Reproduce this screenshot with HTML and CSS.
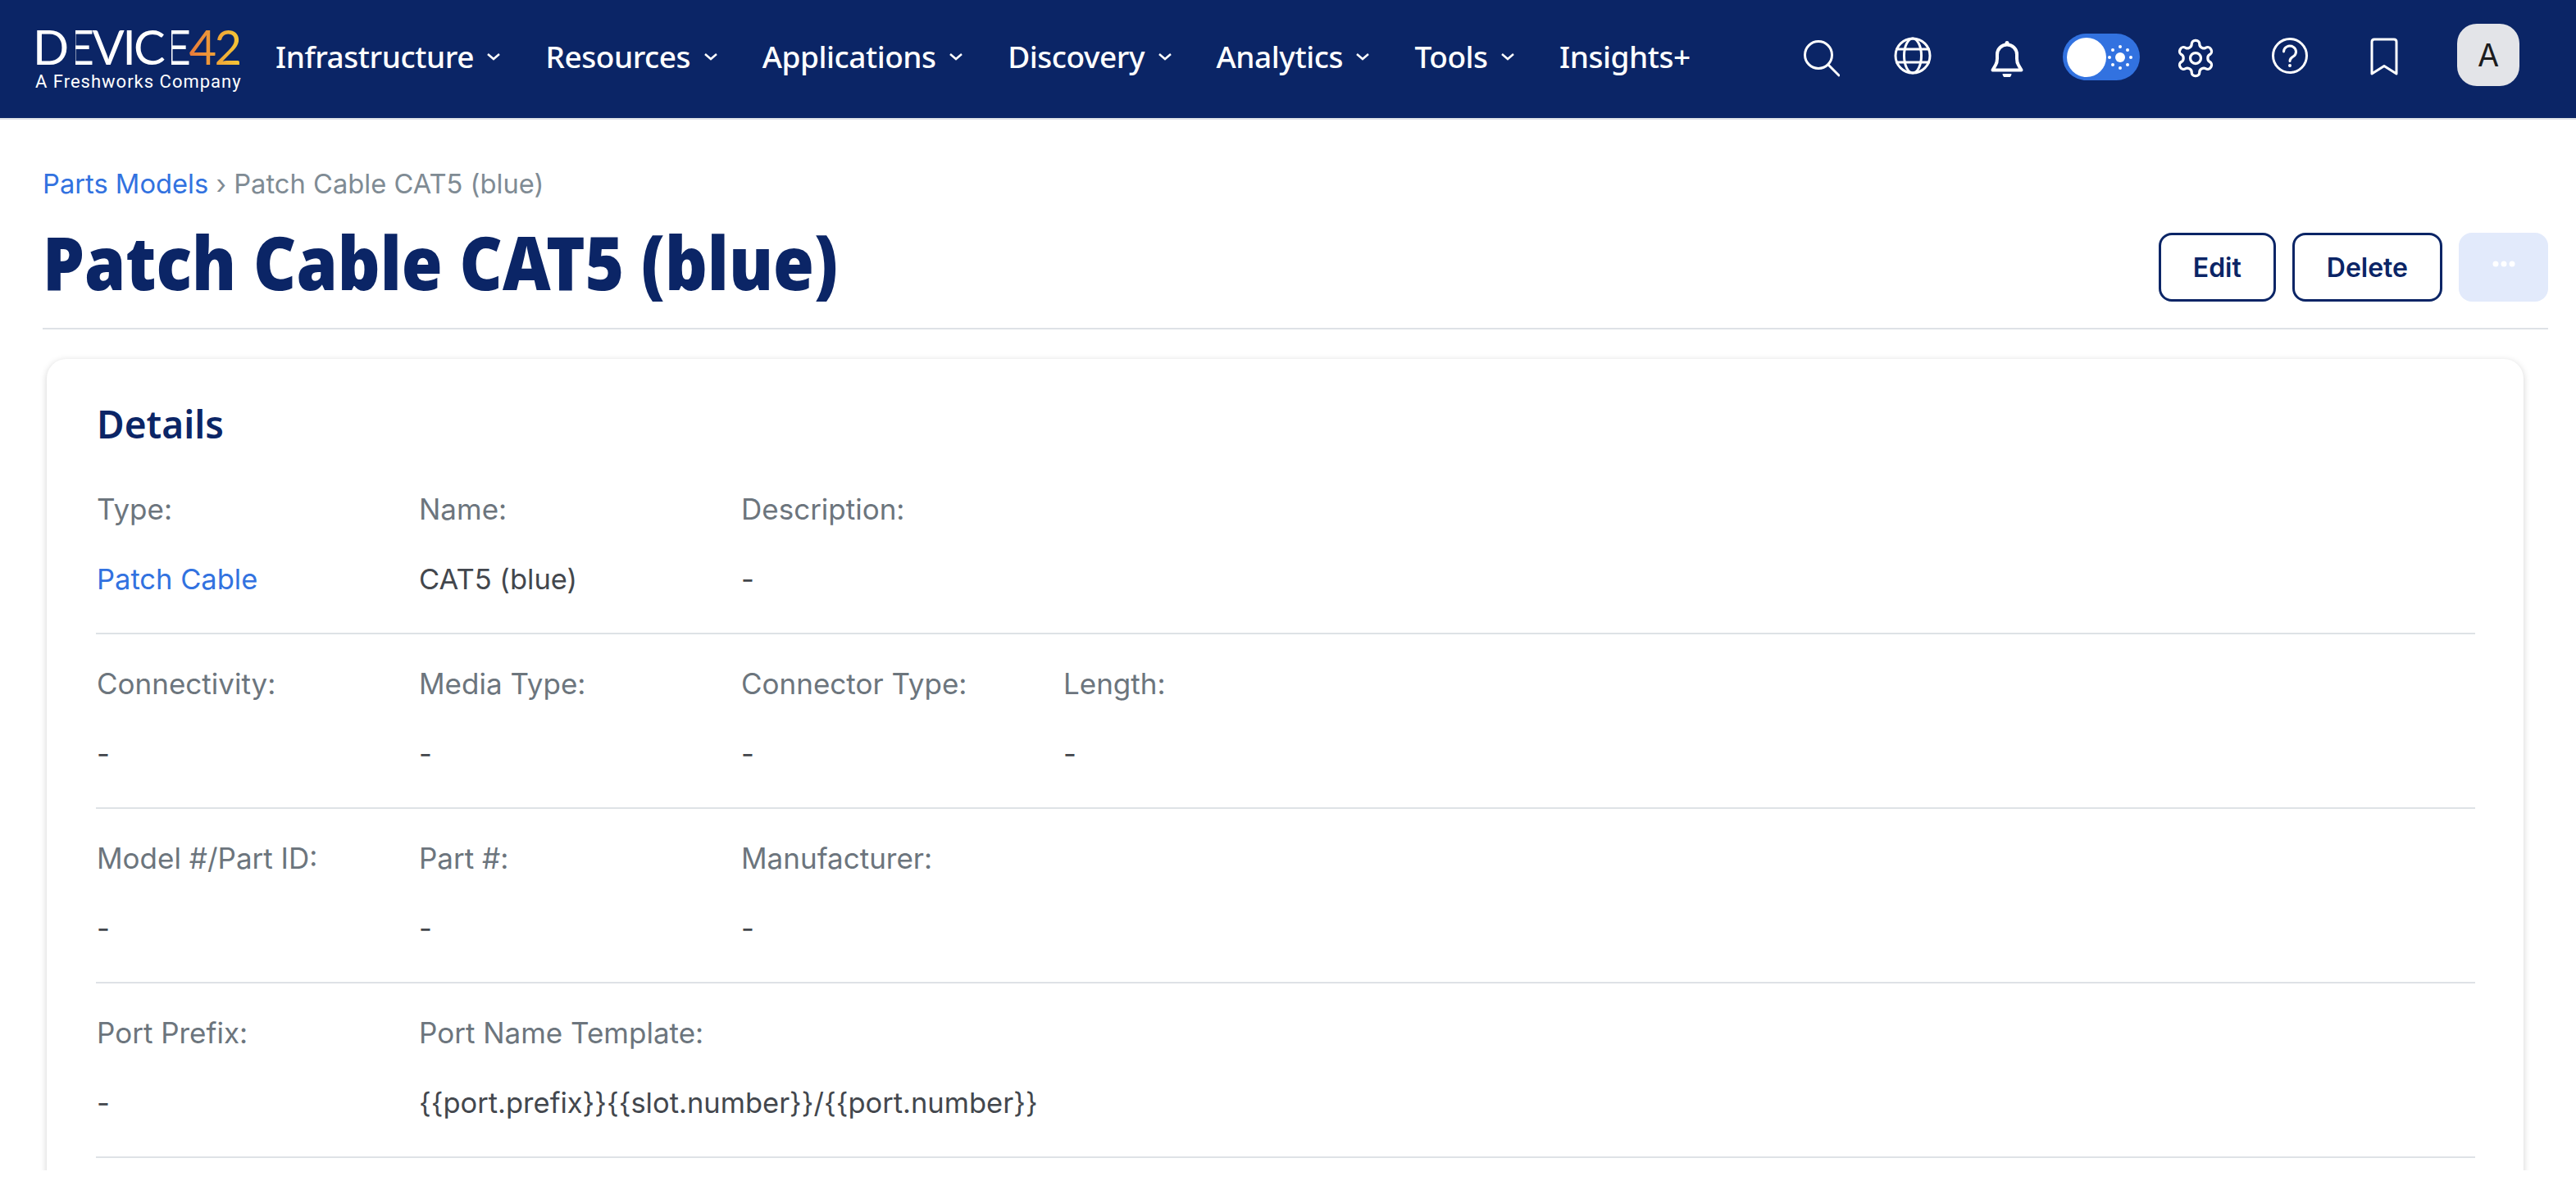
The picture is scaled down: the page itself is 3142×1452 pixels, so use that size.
FILE: index.html
```html
<!DOCTYPE html>
<html lang="en">
<head>
    <meta charset="UTF-8">
    <meta name="viewport" content="width=device-width, initial-scale=1.0">
    <title>Patch Cable CAT5 (blue)</title>
    <link rel="stylesheet" href="styles.css">
</head>
<body>
    <nav class="topbar">
        <a class="logo" href="#">
            <span class="logo-name">D<span class="logo-e">E</span>VIC<span class="logo-e">E</span><span class="logo-num">42</span></span>
            <span class="logo-sub">A Freshworks Company</span>
        </a>
        <ul class="menu">
            <li class="menu-item">Infrastructure <svg class="chevron" viewBox="0 0 18 10"><path d="M2 2l7 6 7-6"/></svg></li>
            <li class="menu-item">Resources <svg class="chevron" viewBox="0 0 18 10"><path d="M2 2l7 6 7-6"/></svg></li>
            <li class="menu-item">Applications <svg class="chevron" viewBox="0 0 18 10"><path d="M2 2l7 6 7-6"/></svg></li>
            <li class="menu-item">Discovery <svg class="chevron" viewBox="0 0 18 10"><path d="M2 2l7 6 7-6"/></svg></li>
            <li class="menu-item">Analytics <svg class="chevron" viewBox="0 0 18 10"><path d="M2 2l7 6 7-6"/></svg></li>
            <li class="menu-item">Tools <svg class="chevron" viewBox="0 0 18 10"><path d="M2 2l7 6 7-6"/></svg></li>
            <li class="menu-item">Insights+</li>
        </ul>
        <div class="tools">
            <span class="tool">
                <svg class="icon" viewBox="0 0 52 52"><circle cx="26" cy="25" r="16.5"/><path d="M38 37l13 13"/></svg>
            </span>
            <span class="tool">
                <svg class="icon" viewBox="0 0 52 52"><circle cx="26" cy="26" r="21"/><ellipse cx="26" cy="26" rx="10.5" ry="21"/><path d="M6.5 18h39M6.5 34h39"/></svg>
            </span>
            <span class="tool">
                <svg class="icon bell" viewBox="0 0 52 52"><path d="M8.500 43.500h35l-3.500-6q-2-3-2-8v-5a12 12 0 0 0-24 0v5q0 5-2 8z" stroke-linejoin="round"/><circle class="solid" cx="26" cy="10.500" r="2.500"/><path class="solid" d="M20.500 48h11a5.500 5.500 0 0 1-11 0z"/></svg>
            </span>
            <span class="tool">
                <span class="switch">
                    <span class="switch-knob"></span>
                    <svg class="switch-sun" viewBox="0 0 32 32">
                        <circle cx="16" cy="16" r="6"/>
                        <circle cx="16" cy="3" r="2"/><circle cx="16" cy="29" r="2"/><circle cx="3" cy="16" r="2"/><circle cx="29" cy="16" r="2"/>
                        <circle cx="7" cy="7" r="2"/><circle cx="25" cy="7" r="2"/><circle cx="7" cy="25" r="2"/><circle cx="25" cy="25" r="2"/>
                    </svg>
                </span>
            </span>
            <span class="tool">
                <svg class="icon gear" viewBox="0 0 24 24"><path d="M12.220 2h-.44a2 2 0 0 0-2 2v.18a2 2 0 0 1-1 1.730l-.43.25a2 2 0 0 1-2 0l-.15-.08a2 2 0 0 0-2.730.73l-.22.38a2 2 0 0 0 .73 2.730l.15.1a2 2 0 0 1 1 1.720v.51a2 2 0 0 1-1 1.740l-.15.09a2 2 0 0 0-.73 2.730l.22.38a2 2 0 0 0 2.730.73l.15-.08a2 2 0 0 1 2 0l.43.25a2 2 0 0 1 1 1.730V20a2 2 0 0 0 2 2h.44a2 2 0 0 0 2-2v-.18a2 2 0 0 1 1-1.730l.43-.25a2 2 0 0 1 2 0l.15.08a2 2 0 0 0 2.730-.73l.22-.39a2 2 0 0 0-.73-2.730l-.15-.08a2 2 0 0 1-1-1.740v-.5a2 2 0 0 1 1-1.740l.15-.09a2 2 0 0 0 .73-2.730l-.22-.38a2 2 0 0 0-2.730-.73l-.15.08a2 2 0 0 1-2 0l-.43-.25a2 2 0 0 1-1-1.730V4a2 2 0 0 0-2-2z"/><circle cx="12" cy="12" r="3"/></svg>
            </span>
            <span class="tool">
                <svg class="icon" viewBox="0 0 52 52"><circle cx="26" cy="26" r="20.500"/><path d="M18.500 21a7.500 7 0 1 1 11.500 6q-4 2.500-4 5.500"/><circle class="solid" cx="26" cy="38" r="2"/></svg>
            </span>
            <span class="tool">
                <svg class="icon" viewBox="0 0 52 52"><path d="M11 48V9q0-3 3-3h24q3 0 3 3v39L26 38.500z" stroke-linejoin="round"/></svg>
            </span>
            <span class="avatar">A</span>
        </div>
    </nav>

    <main class="page">
        <p class="crumbs"><a href="#">Parts Models</a> › Patch Cable CAT5 (blue)</p>
        <header class="page-head">
            <h1>Patch Cable CAT5 (blue)</h1>
            <div class="actions">
                <button class="btn">Edit</button>
                <button class="btn">Delete</button>
                <button class="btn-more">
                    <svg viewBox="0 0 28 8"><circle cx="4" cy="4" r="3.500"/><circle cx="14" cy="4" r="3.500"/><circle cx="24" cy="4" r="3.500"/></svg>
                </button>
            </div>
        </header>

        <section class="card">
            <h2>Details</h2>
            <div class="row">
                <div class="field"><span class="label">Type:</span><a class="value link" href="#">Patch Cable</a></div>
                <div class="field"><span class="label">Name:</span><span class="value">CAT5 (blue)</span></div>
                <div class="field"><span class="label">Description:</span><span class="value">-</span></div>
            </div>
            <div class="row">
                <div class="field"><span class="label">Connectivity:</span><span class="value">-</span></div>
                <div class="field"><span class="label">Media Type:</span><span class="value">-</span></div>
                <div class="field"><span class="label">Connector Type:</span><span class="value">-</span></div>
                <div class="field"><span class="label">Length:</span><span class="value">-</span></div>
            </div>
            <div class="row">
                <div class="field"><span class="label">Model #/Part ID:</span><span class="value">-</span></div>
                <div class="field"><span class="label">Part #:</span><span class="value">-</span></div>
                <div class="field"><span class="label">Manufacturer:</span><span class="value">-</span></div>
            </div>
            <div class="row">
                <div class="field"><span class="label">Port Prefix:</span><span class="value">-</span></div>
                <div class="field field-wide"><span class="label">Port Name Template:</span><span class="value">{{port.prefix}}{{slot.number}}/{{port.number}}</span></div>
            </div>
        </section>
    </main>
</body>
</html>
```
FILE: styles.css
```css
* {
    box-sizing: border-box;
}

html, body {
    height: 100%;
}

body {
    margin: 0;
    background-color: white;
    color: #43474d;
    font-family: Inter, "Liberation Sans", sans-serif;
    overflow: hidden;
}

a {
    color: #3272e0;
    text-decoration: none;
}

/* top bar */
.topbar {
    display: flex;
    align-items: center;
    height: 146px;
    padding-left: 43px;
    padding-right: 69px;
    background-color: #0b2566;
    border-bottom: 2px solid #dee2e6;
    color: white;
}

.logo {
    display: flex;
    flex-direction: column;
    width: 293px;
    color: white;
}

.logo-name {
    margin-left: -3px;
    font-family: Lato, sans-serif;
    font-size: 58px;
    line-height: 50px;
    letter-spacing: -2.500px;
    white-space: nowrap;
}

.logo-e {
    position: relative;
    display: inline-block;
}

/* the logo's E has no stem */
.logo-e::before {
    content: "";
    position: absolute;
    left: 3px;
    top: 0;
    bottom: 0;
    width: 7px;
    background-color: #0b2566;
}

.logo-num {
    background: linear-gradient(90deg, #e8783a, #f5c736);
    -webkit-background-clip: text;
    background-clip: text;
    color: transparent;
}

.logo-sub {
    margin-top: 5px;
    font-family: Roboto, sans-serif;
    font-size: 22px;
    line-height: 26px;
    letter-spacing: 1px;
    white-space: nowrap;
}

.menu {
    display: flex;
    gap: 54px;
    margin: 0 0 6px;
    padding: 0;
    list-style: none;
}

.menu-item {
    display: flex;
    align-items: center;
    gap: 15.500px;
    font-family: "Noto Sans", sans-serif;
    font-size: 37px;
    font-weight: 500;
    letter-spacing: -.45px;
    line-height: 48px;
    white-space: nowrap;
}

.chevron {
    width: 18px;
    height: 10px;
    fill: none;
    stroke: white;
    stroke-width: 2.500;
}

.tools {
    display: flex;
    align-items: center;
    margin-left: auto;
    margin-bottom: 8px;
}

.tool {
    display: flex;
    justify-content: center;
    width: 115px;
}

.icon {
    width: 52px;
    height: 52px;
    fill: none;
    stroke: white;
    stroke-width: 3;
    stroke-linecap: round;
}

.icon .solid {
    fill: white;
    stroke: none;
}

.bell {
    stroke-width: 4;
}

.gear {
    margin-top: 6px;
    stroke-width: 1.500;
}

.switch {
    display: flex;
    align-items: center;
    justify-content: space-between;
    width: 94px;
    height: 57px;
    margin-top: 3px;
    padding: 0 8px 0 5px;
    border-radius: 29px;
    background-color: #3272e0;
}

.switch-knob {
    width: 48px;
    height: 48px;
    border-radius: 50%;
    background-color: white;
}

.switch-sun {
    width: 32px;
    height: 32px;
    fill: white;
}

.avatar {
    display: flex;
    align-items: center;
    justify-content: center;
    width: 76px;
    height: 76px;
    margin-bottom: 2px;
    margin-left: 32px;
    border-radius: 24px;
    background-color: #e3e4e8;
    color: #1c1c1e;
    font-size: 38px;
}

/* page */
.page {
    height: 1282px;
    padding: 0 34px 0 52px;
    overflow: hidden;
}

.crumbs {
    margin: 58px 0 0;
    color: #7f8b94;
    font-size: 32.700px;
    line-height: 40px;
}

.page-head {
    display: flex;
    align-items: center;
    justify-content: space-between;
    height: 158px;
    border-bottom: 2px solid #dee2e6;
}

h1 {
    margin: 0 0 7px;
    color: #0b2566;
    font-family: "Noto Sans", sans-serif;
    font-size: 90px;
    font-weight: 900;
    line-height: 110px;
    white-space: nowrap;
    transform: scaleX(.897);
    transform-origin: left center;
}

.actions {
    display: flex;
    gap: 20px;
    margin-top: 8px;
}

.btn {
    height: 84px;
    padding: 0 39px;
    border: 3px solid #0b2566;
    border-radius: 16px;
    background-color: white;
    color: #0b2566;
    font-family: Inter, sans-serif;
    font-size: 32px;
    font-weight: 600;
}

.btn-more {
    display: flex;
    align-items: center;
    justify-content: center;
    width: 109px;
    height: 84px;
    padding: 0 0 8px;
    border: 0;
    border-radius: 16px;
    background-color: #e2eafb;
}

.btn-more svg {
    width: 28px;
    height: 8px;
    fill: white;
}

.card {
    margin: 36px 30px 0 5px;
    padding: 52px 59px 0 61px;
    min-height: 1100px;
    border-radius: 24px;
    background-color: white;
    box-shadow: 0 2px 8px rgba(0, 0, 0, .18);
}

h2 {
    margin: 0 0 17px;
    color: #0b2566;
    font-family: "Noto Sans", sans-serif;
    font-size: 46px;
    font-weight: 600;
    line-height: 54px;
}

.row {
    display: grid;
    grid-template-columns: repeat(auto-fill, 393px);
    height: 213px;
    margin-left: -1px;
    padding-top: 39px;
    padding-left: 1px;
    border-bottom: 2px solid #dee2e6;
}

.field {
    display: flex;
    flex-direction: column;
    gap: 44px;
    font-size: 35px;
    line-height: 42px;
}

.field-wide {
    white-space: nowrap;
}

.label {
    color: #6c757d;
}

.value {
    font-size: 34.500px;
}

.link {
    color: #3272e0;
}
```
